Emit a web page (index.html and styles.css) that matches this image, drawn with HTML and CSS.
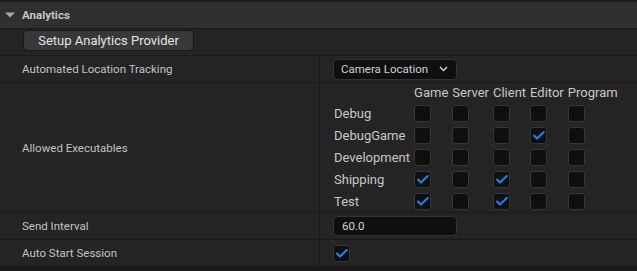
FILE: index.html
```html
<!DOCTYPE html>
<html>
<head>
<meta charset="utf-8">
<link rel="stylesheet" href="styles.css">
</head>
<body>
<div class="panel">
  <div class="category">
    <svg class="arrow" width="10" height="6" viewBox="0 0 10 6"><path d="M0 0.5 H10 L5 5.5 Z" fill="#a9a9a9"/></svg>
    <span class="cat-title">Analytics</span>
  </div>
  <div class="row button-row">
    <button class="btn">Setup Analytics Provider</button>
  </div>
  <div class="row prop">
    <div class="name">Automated Location Tracking</div>
    <div class="value">
      <div class="combo">
        <span>Camera Location</span>
        <svg class="chev" width="9" height="6" viewBox="0 0 9 6"><path d="M1 1 L4.5 4.5 L8 1" fill="none" stroke="#d0d0d0" stroke-width="1.5"/></svg>
      </div>
    </div>
  </div>
  <div class="row prop tall">
    <div class="name">Allowed Executables</div>
    <div class="value">
      <div class="matrix">
        <span></span>
        <span class="colhead">Game</span>
        <span class="colhead">Server</span>
        <span class="colhead">Client</span>
        <span class="colhead">Editor</span>
        <span class="colhead">Program</span>

        <span class="rowhead">Debug</span>
        <span class="cb"></span><span class="cb"></span><span class="cb"></span><span class="cb"></span><span class="cb"></span>

        <span class="rowhead">DebugGame</span>
        <span class="cb"></span><span class="cb"></span><span class="cb"></span><span class="cb on"></span><span class="cb"></span>

        <span class="rowhead">Development</span>
        <span class="cb"></span><span class="cb"></span><span class="cb"></span><span class="cb"></span><span class="cb"></span>

        <span class="rowhead">Shipping</span>
        <span class="cb on"></span><span class="cb"></span><span class="cb on"></span><span class="cb"></span><span class="cb"></span>

        <span class="rowhead">Test</span>
        <span class="cb on"></span><span class="cb"></span><span class="cb on"></span><span class="cb"></span><span class="cb"></span>
      </div>
    </div>
  </div>
  <div class="row prop">
    <div class="name">Send Interval</div>
    <div class="value">
      <div class="numbox">60.0</div>
    </div>
  </div>
  <div class="row prop">
    <div class="name">Auto Start Session</div>
    <div class="value">
      <span class="cb on"></span>
    </div>
  </div>
</div>
</body>
</html>
```

FILE: styles.css
```css
html, body {
  margin: 0;
  padding: 0;
  background: #1b1b1b;
  width: 637px;
  height: 271px;
  overflow: hidden;
  font-family: Roboto, "Noto Sans", sans-serif;
}

.panel {
  margin-top: 2px;
  display: flex;
  flex-direction: column;
  gap: 1px;
  background: #1a1a1a;
}

.category {
  height: 26px;
  background: #2f2f2f;
  display: flex;
  align-items: center;
  padding-left: 5px;
  gap: 7px;
}

.arrow {
  display: block;
}

.cat-title {
  font-weight: bold;
  font-size: 11.5px;
  color: #c4c4c4;
}

.row {
  background: #242424;
  height: 26px;
}

.button-row {
  display: flex;
  align-items: flex-start;
  padding-left: 23px;
}

.btn {
  margin-top: 1px;
  width: 171px;
  height: 21px;
  background: #383838;
  border: 1px solid #161616;
  border-radius: 4px;
  color: #e4e4e4;
  font-family: Roboto, "Noto Sans", sans-serif;
  font-size: 13px;
  padding: 0;
  line-height: 19px;
  text-align: center;
}

.prop {
  display: grid;
  grid-template-columns: 319px 1px 1fr;
}

.prop::before {
  content: "";
  grid-column: 2;
  grid-row: 1;
  background: #1a1a1a;
}

.name {
  grid-column: 1;
  grid-row: 1;
  padding-left: 22px;
  display: flex;
  align-items: center;
  font-size: 11.5px;
  color: #c2c2c2;
}

.value {
  grid-column: 3;
  grid-row: 1;
  padding-left: 13px;
  display: flex;
  align-items: center;
}

.tall {
  height: 129px;
}

.tall .value {
  align-items: flex-start;
  padding-left: 14px;
}

.combo {
  box-sizing: border-box;
  width: 124px;
  height: 21px;
  background: #0f0f0f;
  border: 1px solid #333333;
  border-radius: 4px;
  display: flex;
  align-items: center;
  padding-left: 7px;
  gap: 11px;
  font-size: 11.5px;
  color: #d2d2d2;
}

.chev {
  display: block;
}

.numbox {
  box-sizing: border-box;
  width: 124px;
  height: 20px;
  background: #0f0f0f;
  border: 1px solid #333333;
  border-radius: 4px;
  display: flex;
  align-items: center;
  padding-left: 8px;
  font-size: 11.5px;
  color: #d6d6d6;
}

.matrix {
  display: grid;
  grid-template-columns: repeat(6, auto);
  grid-template-rows: 19px repeat(5, 22px);
  column-gap: 4px;
  align-items: center;
  justify-items: start;
  font-size: 13px;
  color: #c8c8c8;
}

.colhead, .rowhead {
  line-height: 15px;
  white-space: nowrap;
}

.cb {
  box-sizing: border-box;
  display: block;
  width: 17px;
  height: 17px;
  background: #0f0f0f;
  border: 1px solid #363636;
  border-radius: 3px;
}

.cb.on {
  background: #0f0f0f url("data:image/svg+xml;utf8,<svg xmlns='http://www.w3.org/2000/svg' width='15' height='15' viewBox='0 0 15 15'><path d='M3 7.5 L6 10.6 L12.8 4' fill='none' stroke='%231f82e6' stroke-width='2.1' stroke-linecap='round' stroke-linejoin='round'/></svg>") no-repeat center;
}
```
